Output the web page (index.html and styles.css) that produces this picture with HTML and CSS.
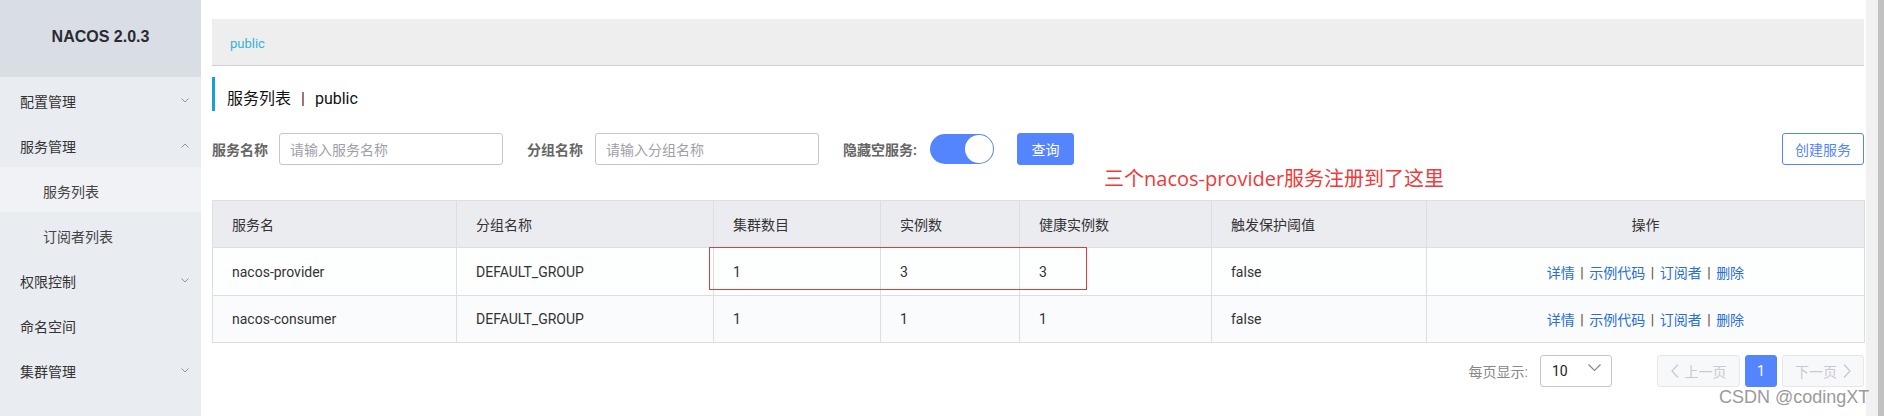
FILE: index.html
```html
<!DOCTYPE html>
<html lang="zh-CN">
<head>
<meta charset="utf-8">
<title>Nacos 服务列表</title>
<link rel="stylesheet" href="styles.css">
</head>
<body>
<div class="page">
  <aside class="sidebar">
    <div class="logo">NACOS 2.0.3</div>
    <ul class="menu">
      <li class="item"><span>配置管理</span><svg class="arrow" viewBox="0 0 8 5"><path d="M0.5 0.5 L4 4 L7.5 0.5"/></svg></li>
      <li class="item"><span>服务管理</span><svg class="arrow" viewBox="0 0 8 5"><path d="M0.5 4.5 L4 1 L7.5 4.5"/></svg></li>
      <li class="item sub active"><span>服务列表</span></li>
      <li class="item sub"><span>订阅者列表</span></li>
      <li class="item"><span>权限控制</span><svg class="arrow" viewBox="0 0 8 5"><path d="M0.5 0.5 L4 4 L7.5 0.5"/></svg></li>
      <li class="item"><span>命名空间</span></li>
      <li class="item"><span>集群管理</span><svg class="arrow" viewBox="0 0 8 5"><path d="M0.5 0.5 L4 4 L7.5 0.5"/></svg></li>
    </ul>
  </aside>

  <main class="main">
    <div class="breadcrumb"><span class="ns">public</span></div>
    <h2 class="title">服务列表<span class="sep">|</span>public</h2>

    <div class="filters">
      <label class="flabel">服务名称</label>
      <div class="input"><span class="ph">请输入服务名称</span></div>
      <label class="flabel gap">分组名称</label>
      <div class="input"><span class="ph">请输入分组名称</span></div>
      <label class="flabel gap">隐藏空服务:</label>
      <div class="switch"><span class="knob"></span></div>
      <button class="btn primary">查询</button>
      <span class="spacer"></span>
      <button class="btn outline">创建服务</button>
    </div>

    <table class="grid">
      <colgroup>
        <col class="c1"><col class="c2"><col class="c3"><col class="c4"><col class="c5"><col class="c6"><col class="c7">
      </colgroup>
      <thead>
        <tr>
          <th>服务名</th><th>分组名称</th><th>集群数目</th><th>实例数</th><th>健康实例数</th><th>触发保护阈值</th><th class="center">操作</th>
        </tr>
      </thead>
      <tbody>
        <tr class="r1">
          <td>nacos-provider</td><td>DEFAULT_GROUP</td><td>1</td><td>3</td><td>3</td><td>false</td>
          <td class="center ops"><a>详情</a><span class="bar">|</span><a>示例代码</a><span class="bar">|</span><a>订阅者</a><span class="bar">|</span><a>删除</a></td>
        </tr>
        <tr class="r2">
          <td>nacos-consumer</td><td>DEFAULT_GROUP</td><td>1</td><td>1</td><td>1</td><td>false</td>
          <td class="center ops"><a>详情</a><span class="bar">|</span><a>示例代码</a><span class="bar">|</span><a>订阅者</a><span class="bar">|</span><a>删除</a></td>
        </tr>
      </tbody>
    </table>

    <div class="pager">
      <span class="ps-label">每页显示:</span>
      <div class="select"><span>10</span><svg class="chev" viewBox="0 0 13 8"><path d="M0.5 0.5 L6.5 6.5 L12.5 0.5"/></svg></div>
      <button class="pbtn disabled prev"><svg viewBox="0 0 8 14"><path d="M7 0.5 L1 7 L7 13.5"/></svg><span>上一页</span></button>
      <button class="pbtn current">1</button>
      <button class="pbtn disabled next"><span>下一页</span><svg viewBox="0 0 8 14"><path d="M1 0.5 L7 7 L1 13.5"/></svg></button>
    </div>
  </main>

  <div class="scrollbar"><div class="thumb"></div></div>

  <div class="annotation">三个nacos-provider服务注册到了这里</div>
  <div class="annot-box"></div>
  <div class="watermark">CSDN @codingXT</div>
</div>
</body>
</html>
```

FILE: styles.css
```css
* { box-sizing: border-box; }
html, body { margin: 0; padding: 0; }
body {
  width: 1884px;
  height: 416px;
  overflow: hidden;
  background: #fff;
  font-family: Roboto, "Noto Sans CJK SC", sans-serif;
  font-size: 14px;
  color: #333;
}
.page {
  position: relative;
  display: flex;
  width: 1884px;
  height: 416px;
}

/* sidebar */
.sidebar {
  width: 201px;
  flex: none;
  background: #e9ecf1;
  height: 100%;
}
.logo {
  height: 77px;
  background: #d9dde4;
  display: flex;
  align-items: center;
  justify-content: center;
  font-family: "Liberation Sans", Arial, sans-serif;
  font-weight: bold;
  font-size: 16px;
  color: #2a2a33;
  padding-bottom: 3px;
}
.menu { list-style: none; margin: 0; padding: 0; }
.item {
  height: 45px;
  display: flex;
  align-items: center;
  padding: 5px 12px 0 20px;
  font-size: 14px;
  color: #333;
}
.item span { flex: 1; line-height: 20px; }
.item.sub { padding-left: 43px; color: #444; }
.item.active { background: #f0f2f5; }
.arrow {
  width: 8px;
  height: 5px;
  fill: none;
  stroke: #8a94a6;
  stroke-width: 1;
  margin-top: -4px;
}

/* main */
.main {
  width: 1652px;
  flex: none;
  margin-left: 11px;
  padding-top: 19px;
}
.breadcrumb {
  height: 47px;
  background: #eeeeee;
  border-bottom: 1px solid #cfcfd3;
  display: flex;
  align-items: center;
  padding-left: 18px;
  padding-top: 3px;
}
.ns { color: #30b4d8; font-size: 13px; }
.title {
  margin: 11px 0 0;
  height: 34px;
  border-left: 3px solid #1a9fd4;
  padding: 9px 0 0 12px;
  font-weight: normal;
  font-size: 16px;
  line-height: 26px;
  color: #111;
}
.title .sep { margin: 0 10px; color: #5a1a1a; }

.filters {
  margin-top: 22px;
  height: 32px;
  display: flex;
  align-items: center;
}
.flabel { font-weight: bold; color: #666; font-size: 14px; margin-right: 11px; }
.flabel.gap { margin-left: 24px; margin-right: 12px; }
.input {
  width: 224px;
  height: 32px;
  border: 1px solid #c4c6cf;
  border-radius: 3px;
  display: flex;
  align-items: center;
  padding-left: 10px;
}
.ph { color: #a0a0a8; font-size: 14px; }
.switch {
  width: 64px;
  height: 30px;
  border-radius: 15px;
  background: #5584ff;
  position: relative;
  margin-left: 1px;
}
.knob {
  position: absolute;
  right: 1px;
  top: 1px;
  width: 28px;
  height: 28px;
  border-radius: 50%;
  background: #fff;
}
.btn {
  font-family: inherit;
  font-size: 14px;
  height: 32px;
  border-radius: 3px;
  cursor: pointer;
}
.btn.primary {
  margin-left: 23px;
  width: 57px;
  background: #5584ff;
  border: 1px solid #5584ff;
  color: #fff;
}
.spacer { flex: 1; }
.btn.outline {
  width: 82px;
  background: #fff;
  border: 1px solid #5584ff;
  color: #5584ff;
}

/* table */
.grid {
  margin-top: 35px;
  width: 1652px;
  border-collapse: collapse;
  table-layout: fixed;
  font-size: 14px;
}
.c1 { width: 244px; }
.c2 { width: 257px; }
.c3 { width: 167px; }
.c4 { width: 139px; }
.c5 { width: 192px; }
.c6 { width: 215px; }
.c7 { width: 438px; }
.grid th, .grid td {
  border: 1px solid #dcdee3;
  padding: 0 19px;
  text-align: left;
  color: #333;
  white-space: nowrap;
}
.grid th {
  height: 47px;
  background: #ebecf0;
  font-weight: normal;
}
.grid .r1 td { height: 48px; background: #fdfefe; }
.grid .r2 td { height: 47px; background: #fafbfc; }
.grid .center { text-align: center; }
.ops a { color: #2a6fd6; }
.ops .bar { margin: 0 5.5px; color: #5a4a30; }

/* pager */
.pager {
  margin-top: 12px;
  height: 32px;
  display: flex;
  justify-content: flex-end;
  align-items: center;
}
.ps-label { color: #888; font-size: 14px; margin-right: 12px; }
.select {
  width: 72px;
  height: 32px;
  border: 1px solid #c4c6cf;
  border-radius: 3px;
  display: flex;
  align-items: center;
  justify-content: space-between;
  padding: 0 10px 0 11px;
  color: #222;
}
.chev { width: 13px; height: 8px; fill: none; stroke: #888; stroke-width: 1.2; margin-top: -6px; }
.pbtn {
  font-family: inherit;
  font-size: 14px;
  height: 32px;
  border-radius: 3px;
  display: flex;
  align-items: center;
  justify-content: center;
  gap: 6px;
}
.pbtn svg { width: 8px; height: 14px; fill: none; stroke: #c8cad0; stroke-width: 1.3; }
.pbtn.disabled {
  background: #f7f8fa;
  border: 1px solid #e6e7eb;
  color: #c8cad0;
}
.pbtn.prev { width: 83px; margin-left: 45px; }
.pbtn.current {
  width: 32px;
  margin-left: 5px;
  background: #5584ff;
  border: 1px solid #5584ff;
  color: #fff;
}
.pbtn.next { width: 82px; margin-left: 5px; }

/* scrollbar */
.scrollbar {
  width: 18px;
  margin-left: 2px;
  flex: none;
  background: #f1f1f1;
  display: flex;
  justify-content: flex-end;
}
.thumb { width: 6px; height: 100%; background: #c1c1c1; }

/* overlays */
.annotation {
  position: absolute;
  left: 1104px;
  top: 166px;
  font-size: 20px;
  line-height: 26px;
  color: #f03a3a;
  font-family: "Open Sans", "Noto Sans CJK SC", sans-serif;
  white-space: nowrap;
}
.annot-box {
  position: absolute;
  left: 709px;
  top: 247px;
  width: 378px;
  height: 43px;
  border: 1px solid #e53a3a;
}
.watermark {
  position: absolute;
  left: 1719px;
  top: 386px;
  font-family: "Liberation Sans", Arial, sans-serif;
  font-size: 18px;
  line-height: 22px;
  color: #9b9b9b;
  white-space: nowrap;
}
```
